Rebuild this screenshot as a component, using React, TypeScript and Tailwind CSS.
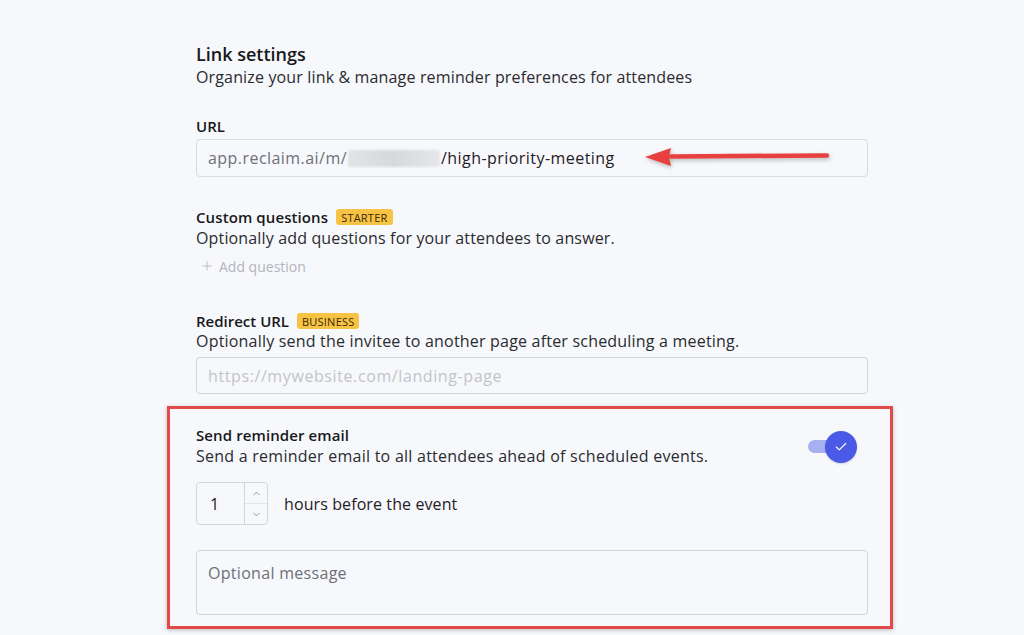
import { Plus, ChevronUp, ChevronDown, Check } from "lucide-react";

function Badge({ label }: { label: string }) {
  return (
    <span className="ml-2 inline-flex h-[16px] items-center rounded-[3px] bg-[#f7c344] px-[5px] text-[11px] font-medium uppercase leading-none tracking-[0.02em] text-[#3b2a05]">
      {label}
    </span>
  );
}

function Toggle() {
  return (
    <div className="relative mr-[11px] mt-[6px] h-[32px] w-[49px] shrink-0">
      <div className="absolute left-0 top-[9px] h-[13px] w-[34px] rounded-full bg-[#a7b1f1]" />
      <div className="absolute right-0 top-0 flex h-[32px] w-[32px] items-center justify-center rounded-full bg-[#4a5ae6] shadow-[0_1px_2px_rgba(0,0,0,0.15)]">
        <Check className="h-[14px] w-[14px] text-white" strokeWidth={2} />
      </div>
    </div>
  );
}

function Arrow() {
  return (
    <svg
      className="pointer-events-none absolute left-[446px] top-[4px] drop-shadow-[1px_2px_2px_rgba(0,0,0,0.25)]"
      width="190"
      height="30"
      viewBox="0 0 190 30"
    >
      <path d="M28 12.5 L184 11.5" stroke="#e8403f" strokeWidth="4.5" strokeLinecap="round" />
      <path d="M2 13 L28 4 L26 13 L28 22 Z" fill="#e8403f" />
    </svg>
  );
}

export default function App() {
  return (
    <div
      className="min-h-[635px] bg-[#f7f8fb] text-[#1b1c20]"
      style={{ fontFamily: '"Open Sans", "Noto Sans", sans-serif' }}
    >
      <div className="w-[672px] pt-[42px]" style={{ marginLeft: 196 }}>
        <h1 className="text-[18px] font-semibold leading-[24px] text-[#17181c]">Link settings</h1>
        <p className="text-[16px] leading-[22px] tracking-[0.15px] text-[#2a2b30]">
          Organize your link &amp; manage reminder preferences for attendees
        </p>

        <div className="mt-[28px]">
          <p className="text-[15px] font-semibold leading-[20px] text-[#17181c]">URL</p>
          <div className="relative mt-[3px] flex h-[38px] items-center rounded-[4px] border border-[#d9dbe0] bg-[#f7f8fb] px-[11px] text-[16px] tracking-[0.45px]">
            <span className="text-[#6d7079]">app.reclaim.ai/m/</span>
            <span className="mx-[1px] inline-block h-[17px] w-[92px] rounded-[2px] bg-gradient-to-r from-[#e2e3e6] via-[#d7d8db] to-[#e6e7ea] blur-[1px]" />
            <span className="text-[#1f2025]">/high-priority-meeting</span>
            <Arrow />
          </div>
        </div>

        <div className="mt-[30px]">
          <div className="flex items-center">
            <p className="text-[15px] font-semibold leading-[20px] tracking-[0.1px] text-[#17181c]">Custom questions</p>
            <Badge label="Starter" />
          </div>
          <p className="mt-[1px] text-[16px] leading-[20px] tracking-[0.15px] text-[#2a2b30]">
            Optionally add questions for your attendees to answer.
          </p>
          <div className="mt-[8px] flex h-[20px] items-center gap-[5px] pl-[4px] text-[14px] text-[#b3b5bc]">
            <Plus className="h-[14px] w-[14px]" strokeWidth={1.5} />
            <span>Add question</span>
          </div>
        </div>

        <div className="mt-[35px]">
          <div className="flex items-center">
            <p className="text-[15px] font-semibold leading-[20px] text-[#17181c]">Redirect URL</p>
            <Badge label="Business" />
          </div>
          <p className="text-[16px] leading-[20px] tracking-[0.2px] text-[#2a2b30]">
            Optionally send the invitee to another page after scheduling a meeting.
          </p>
          <div className="mt-[6px] flex h-[37px] items-center rounded-[4px] border border-[#d3d5da] bg-[#f7f8fb] px-[11px] text-[16px] tracking-[0.6px] text-[#c2c4ca]">
            https://mywebsite.com/landing-page
          </div>
        </div>

        <div className="-ml-[29px] -mr-[25px] mt-[12px] border-[3px] border-[#e04a4a] pb-[11px] pl-[26px] pr-[22px] pt-[16px] shadow-[0_1px_4px_rgba(0,0,0,0.25)]">
          <div className="flex items-start justify-between">
            <div>
              <p className="text-[15px] font-semibold leading-[20px] tracking-[0.1px] text-[#17181c]">Send reminder email</p>
              <p className="mt-[1px] text-[16px] leading-[20px] tracking-[0.25px] text-[#2a2b30]">
                Send a reminder email to all attendees ahead of scheduled events.
              </p>
            </div>
            <Toggle />
          </div>

          <div className="mt-[16px] flex items-center">
            <div className="flex h-[43px] w-[72px] rounded-[4px] border border-[#d3d5da]">
              <div className="flex flex-1 items-center pl-[13px] text-[16px] text-[#1f2025]">1</div>
              <div className="flex w-[23px] flex-col border-l border-[#d3d5da]">
                <div className="flex flex-1 items-center justify-center border-b border-[#e3e4e8]">
                  <ChevronUp className="h-[11px] w-[11px] text-[#8a8d95]" strokeWidth={2} />
                </div>
                <div className="flex flex-1 items-center justify-center">
                  <ChevronDown className="h-[11px] w-[11px] text-[#8a8d95]" strokeWidth={2} />
                </div>
              </div>
            </div>
            <span className="ml-[16px] text-[16px] tracking-[0.1px] text-[#1f2025]">hours before the event</span>
          </div>

          <div className="mt-[25px] h-[65px] rounded-[4px] border border-[#d3d5da] px-[11px] pt-[10px] text-[16px] tracking-[0.3px] text-[#6d7079]">
            Optional message
          </div>
        </div>
      </div>
    </div>
  );
}
